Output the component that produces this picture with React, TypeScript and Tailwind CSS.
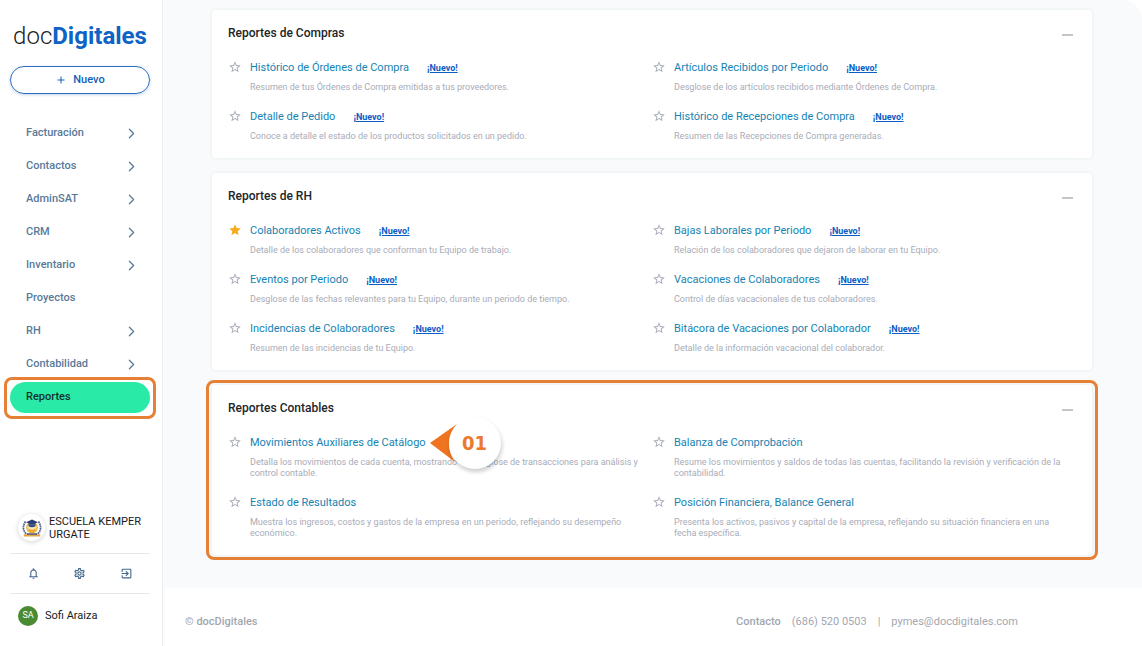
import { useState } from "react";
import { ChevronRight } from "lucide-react";
import {
  MdAdd,
  MdExitToApp,
  MdNotificationsNone,
  MdOutlineSettings,
  MdStar,
  MdStarBorder,
} from "react-icons/md";

interface Report {
  title: string;
  description: string;
  isNew?: boolean;
  favorite?: boolean;
  step?: string;
}

interface Group {
  title: string;
  highlighted?: boolean;
  reports: Report[];
}

const NAV = [
  { label: "Facturación", expandable: true },
  { label: "Contactos", expandable: true },
  { label: "AdminSAT", expandable: true },
  { label: "CRM", expandable: true },
  { label: "Inventario", expandable: true },
  { label: "Proyectos", expandable: false },
  { label: "RH", expandable: true },
  { label: "Contabilidad", expandable: true },
];

const GROUPS: Group[] = [
  {
    title: "Reportes de Compras",
    reports: [
      {
        title: "Histórico de Órdenes de Compra",
        description: "Resumen de tus Órdenes de Compra emitidas a tus proveedores.",
        isNew: true,
      },
      {
        title: "Artículos Recibidos por Periodo",
        description: "Desglose de los artículos recibidos mediante Órdenes de Compra.",
        isNew: true,
      },
      {
        title: "Detalle de Pedido",
        description: "Conoce a detalle el estado de los productos solicitados en un pedido.",
        isNew: true,
      },
      {
        title: "Histórico de Recepciones de Compra",
        description: "Resumen de las Recepciones de Compra generadas.",
        isNew: true,
      },
    ],
  },
  {
    title: "Reportes de RH",
    reports: [
      {
        title: "Colaboradores Activos",
        description: "Detalle de los colaboradores que conforman tu Equipo de trabajo.",
        isNew: true,
        favorite: true,
      },
      {
        title: "Bajas Laborales por Periodo",
        description: "Relación de los colaboradores que dejaron de laborar en tu Equipo.",
        isNew: true,
      },
      {
        title: "Eventos por Periodo",
        description: "Desglose de las fechas relevantes para tu Equipo, durante un periodo de tiempo.",
        isNew: true,
      },
      {
        title: "Vacaciones de Colaboradores",
        description: "Control de días vacacionales de tus colaboradores.",
        isNew: true,
      },
      {
        title: "Incidencias de Colaboradores",
        description: "Resumen de las incidencias de tu Equipo.",
        isNew: true,
      },
      {
        title: "Bitácora de Vacaciones por Colaborador",
        description: "Detalle de la información vacacional del colaborador.",
        isNew: true,
      },
    ],
  },
  {
    title: "Reportes Contables",
    highlighted: true,
    reports: [
      {
        title: "Movimientos Auxiliares de Catálogo",
        description:
          "Detalla los movimientos de cada cuenta, mostrando un desglose de transacciones para análisis y control contable.",
        step: "01",
      },
      {
        title: "Balanza de Comprobación",
        description:
          "Resume los movimientos y saldos de todas las cuentas, facilitando la revisión y verificación de la contabilidad.",
      },
      {
        title: "Estado de Resultados",
        description:
          "Muestra los ingresos, costos y gastos de la empresa en un periodo, reflejando su desempeño económico.",
      },
      {
        title: "Posición Financiera, Balance General",
        description:
          "Presenta los activos, pasivos y capital de la empresa, reflejando su situación financiera en una fecha específica.",
      },
    ],
  },
];

function StepMarker({ step }: { step: string }) {
  return (
    <span className="pointer-events-none absolute top-1/2 left-full z-10 ml-1 flex -translate-y-1/2 items-center">
      <svg width="28" height="38" viewBox="0 0 28 38" className="-mr-[9px]" aria-hidden="true">
        <path d="M0 19 27 0Q12 19 25 38Z" fill="#ee7420" />
      </svg>
      <span className="flex h-[52px] w-[52px] items-center justify-center rounded-full bg-white font-['DejaVu_Sans_Condensed','DejaVu_Sans',sans-serif] text-[20px] font-bold text-[#ec7a2d] shadow-[1px_3px_4px_rgba(0,0,0,0.2)]">
        {step}
      </span>
    </span>
  );
}

function ReportItem({ report }: { report: Report }) {
  const [favorite, setFavorite] = useState(!!report.favorite);

  return (
    <li className="flex gap-2">
      <button
        type="button"
        aria-label={`Favorito: ${report.title}`}
        aria-pressed={favorite}
        onClick={() => setFavorite(!favorite)}
        className="h-3.5 w-3.5 shrink-0"
      >
        {favorite ? (
          <MdStar size={14} className="text-[#f8ab1c]" />
        ) : (
          <MdStarBorder size={14} className="text-[#a9adb9]" />
        )}
      </button>
      <div className="min-w-0 pr-2">
        <div className="flex h-4 items-center gap-[18px] leading-4">
          <a href="#" className="relative text-[11px] text-[#1583b3]">
            {report.title}
            {report.step && <StepMarker step={report.step} />}
          </a>
          {report.isNew && (
            <a href="#" className="text-[9px] font-bold text-[#0b5cc4] underline">
              ¡Nuevo!
            </a>
          )}
        </div>
        <p className="mt-1.5 mb-4 text-[9px] leading-[11px] text-[#a8acb8]">{report.description}</p>
      </div>
    </li>
  );
}

function ReportCard({ group }: { group: Group }) {
  const [open, setOpen] = useState(true);

  return (
    <section className="rounded bg-white px-4 pt-[13px] shadow-[0_0_4px_rgba(30,50,60,0.07)]">
      <div className="mb-[17px] flex items-center justify-between">
        <h2 className="text-xs leading-5 font-medium text-[#212529]">{group.title}</h2>
        <button
          type="button"
          aria-label={`Contraer ${group.title}`}
          aria-expanded={open}
          onClick={() => setOpen(!open)}
          className="flex h-5 items-center px-[3px] pt-1"
        >
          <span className="h-0.5 w-[11px] bg-[#c3c5cb]" />
        </button>
      </div>
      {open && (
        <ul className="grid grid-cols-2">
          {group.reports.map(report => (
            <ReportItem key={report.title} report={report} />
          ))}
        </ul>
      )}
    </section>
  );
}

function SchoolCrest() {
  return (
    <svg width="20" height="20" viewBox="0 0 20 20" aria-hidden="true">
      <path d="M3.6 3.5C.2 8 .8 13 4.8 16.2M16.4 3.5c3.4 4.5 2.8 9.5-1.2 12.7" fill="none" stroke="#53648f" strokeWidth="1.7" strokeDasharray="1.8 .5" />
      <circle cx="10" cy="9.5" r="5.2" fill="#f7e3b4" stroke="#e9b33f" strokeWidth="1.3" />
      <path d="M10 1.5 16 4.3 10 7 4 4.3Z" fill="#263d77" />
      <path d="M6.5 5.5v2.8q3.5 1.8 7 0V5.5L10 7Z" fill="#344c86" />
      <path d="M6.5 10.5 10 12l3.5-1.5v2.7L10 14.5l-3.5-1.3Z" fill="#e9ab2f" />
      <path d="M1.8 16.2h16.4v2.3H1.8Z" fill="#e8a343" />
      <path d="M5 15.3h10v1.4H5Z" fill="#3b4c7c" />
    </svg>
  );
}

function Sidebar() {
  return (
    <aside className="flex w-[163px] shrink-0 flex-col border-r border-[#eceff1] bg-white pr-3 pl-2.5 shadow-[1px_0_3px_rgba(0,0,0,0.04)]">
      <a href="#" className="mt-5 flex h-8 items-center justify-center text-2xl leading-8">
        <span className="font-light text-[#1d1d1f]">doc</span>
        <span className="font-bold text-[#0d63c6]">Digitales</span>
      </a>

      <button
        type="button"
        className="mt-3.5 flex h-7 items-center justify-center gap-1.5 rounded-full border border-[#2b6cbd] text-[11px] font-medium text-[#1260b8] shadow-[0_1px_3px_rgba(20,90,180,0.25)]"
      >
        <MdAdd size={12} />
        Nuevo
      </button>

      <nav className="mt-[23px] text-[11px] font-medium text-[#597a99]">
        <ul>
          {NAV.map(item => (
            <li key={item.label}>
              <a href="#" className="flex h-[33px] items-center justify-between pr-2.5 pl-4">
                {item.label}
                {item.expandable && <ChevronRight size={17} strokeWidth={1.75} />}
              </a>
            </li>
          ))}
          <li className="relative pt-px">
            <a
              href="#"
              aria-current="page"
              className="flex h-[31px] items-center rounded-full bg-[#2aeaa8] pl-4 text-[#14302b]"
            >
              Reportes
            </a>
            <span className="pointer-events-none absolute -inset-x-1.5 -top-1 -bottom-1.5 rounded-lg border-3 border-[#e58035]" />
          </li>
        </ul>
      </nav>

      <div className="mt-auto pb-5 text-[11px] text-[#17191c]">
        <div className="flex items-center gap-1 pb-3 pl-2 leading-[13px]">
          <span className="flex h-[27px] w-[27px] shrink-0 items-center justify-center rounded-full bg-white shadow-[0_1px_5px_rgba(0,0,0,0.18)]">
            <SchoolCrest />
          </span>
          <span>ESCUELA KEMPER URGATE</span>
        </div>
        <div className="flex h-[41px] items-center justify-around border-y border-[#e6e9ec] text-[#44688f]">
          <button type="button" aria-label="Notificaciones">
            <MdNotificationsNone size={13} />
          </button>
          <button type="button" aria-label="Configuración">
            <MdOutlineSettings size={13} />
          </button>
          <button type="button" aria-label="Salir">
            <MdExitToApp size={13} />
          </button>
        </div>
        <div className="mt-3 flex items-center gap-[7px] pl-2">
          <span className="flex h-5 w-5 items-center justify-center rounded-full bg-[#4a8a32] text-[9px] text-white">
            SA
          </span>
          Sofi Araiza
        </div>
      </div>
    </aside>
  );
}

export default function App() {
  return (
    <div className="flex min-h-screen bg-white font-[Roboto,sans-serif]">
      <Sidebar />
      <div className="flex min-w-0 flex-1 flex-col">
        <main className="flex flex-1 flex-col gap-[15px] rounded-tr-[20px] bg-[#f8fafb] pt-2.5 pr-[50px] pb-7 pl-[49px]">
          {GROUPS.map(group =>
            group.highlighted ? (
              <div
                key={group.title}
                className="-mx-1.5 -mt-[5px] rounded-lg border-3 border-[#e58035] px-[3px] py-0.5"
              >
                <ReportCard group={group} />
              </div>
            ) : (
              <ReportCard key={group.title} group={group} />
            )
          )}
        </main>
        <footer className="flex h-[58px] items-center justify-between pt-2.5 pr-[124px] pl-[22px] text-[11px] text-[#a2a7b0]">
          <span className="font-medium">© docDigitales</span>
          <div className="flex gap-[11px]">
            <span className="font-medium">Contacto</span>
            <a href="tel:6865200503">(686) 520 0503</a>
            <span>|</span>
            <a href="mailto:pymes@docdigitales.com">pymes@docdigitales.com</a>
          </div>
        </footer>
      </div>
    </div>
  );
}
